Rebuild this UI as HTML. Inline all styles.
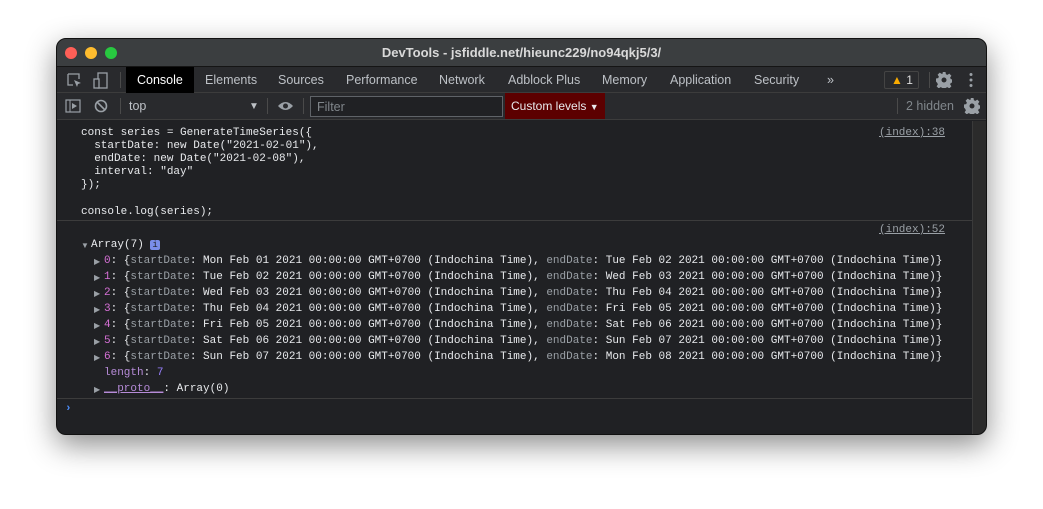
<!DOCTYPE html>
<html><head><style>
*{margin:0;padding:0;box-sizing:border-box}
body{width:1043px;height:509px;background:#fff;position:relative;overflow:hidden;font-family:"Liberation Sans",sans-serif}
.win{position:absolute;left:56px;top:38px;width:931px;height:397px;border-radius:10px;background:#202124;overflow:hidden;box-shadow:0 10px 30px rgba(0,0,0,.45);border:1px solid #111}
.title{height:27px;background:#3b3e40;color:#d9d9d9;font-weight:bold;font-size:13px;text-align:center;line-height:27px;position:relative}
.dot{position:absolute;top:8px;width:12px;height:12px;border-radius:50%}
.tabs{height:27px;background:#292a2d;border-top:1px solid #151515;border-bottom:1px solid #3c3c3c;position:relative;font-size:12.5px;color:#bdc1c6}
.tabs span{position:absolute;top:6px}
.tool{height:27px;background:#292a2d;border-bottom:1px solid #3c3c3c;position:relative;font-size:12.5px;color:#bdc1c6;white-space:nowrap}
.mono{font-family:"Liberation Mono",monospace;font-size:11px;color:#e8eaed;white-space:pre;position:absolute;line-height:13px;height:13px}
.tri{position:absolute;font-size:8px;color:#9aa0a6;line-height:13px}
.k{color:#9aa0a6}.n{color:#d670d6}.p{color:#b68bd8}.v{color:#9980ff}
.link{color:#9aa0a6;text-decoration:underline}
</style></head><body>
<div class="win">
<div class="title">DevTools - jsfiddle.net/hieunc229/no94qkj5/3/
<div class="dot" style="left:8px;background:#fe5f57"></div>
<div class="dot" style="left:28px;background:#febc2e"></div>
<div class="dot" style="left:48px;background:#28c840"></div>
</div>
<div class="tabs">
<svg style="position:absolute;left:10px;top:6px" width="16" height="16"><path d="M1 1h11v5M1 1v11h5" stroke="#9aa0a6" fill="none" stroke-width="1.3"/><path d="M7 7l7 3-3 1-1 3z" fill="#9aa0a6"/></svg>
<svg style="position:absolute;left:36px;top:5px" width="16" height="18"><rect x="5" y="1" width="9" height="15" stroke="#9aa0a6" fill="none" stroke-width="1.3"/><rect x="1" y="7" width="5" height="9" stroke="#9aa0a6" fill="#292a2d" stroke-width="1.3"/></svg>
<div style="position:absolute;left:63px;top:5px;width:1px;height:16px;background:#4a4a4a"></div>
<div style="position:absolute;left:69px;top:0;width:68px;height:26px;background:#000"></div>
<span style="left:80px;color:#fff">Console</span>
<span style="left:148px">Elements</span><span style="left:221px">Sources</span><span style="left:289px">Performance</span><span style="left:382px">Network</span><span style="left:451px">Adblock Plus</span><span style="left:545px">Memory</span><span style="left:613px">Application</span><span style="left:697px">Security</span><span style="left:770px">»</span>
<div style="position:absolute;left:827px;top:4px;width:35px;height:18px;border:1px solid #444;border-radius:2px;font-size:12px;color:#ddd;padding-left:6px;line-height:16px"><span style="color:#f9ab00;position:static">▲</span> 1</div>
<div style="position:absolute;left:872px;top:5px;width:1px;height:16px;background:#4a4a4a"></div>
<svg style="position:absolute;left:879px;top:5px" width="16" height="16" viewBox="0 0 16 16"><path d="M6.5 0h3l.4 2.2 1.5.7 1.9-1.3 2.1 2.1-1.3 1.9.7 1.5 2.2.4v3l-2.2.4-.7 1.5 1.3 1.9-2.1 2.1-1.9-1.3-1.5.7-.4 2.2h-3l-.4-2.2-1.5-.7-1.9 1.3-2.1-2.1 1.3-1.9-.7-1.5L0 9.5v-3l2.2-.4.7-1.5L1.6 2.7l2.1-2.1 1.9 1.3 1.5-.7z" fill="#9aa0a6"/><circle cx="8" cy="8" r="2.5" fill="#292a2d"/></svg>
<svg style="position:absolute;left:912px;top:5px" width="4" height="16"><circle cx="2" cy="2.5" r="1.5" fill="#9aa0a6"/><circle cx="2" cy="8" r="1.5" fill="#9aa0a6"/><circle cx="2" cy="13.5" r="1.5" fill="#9aa0a6"/></svg>
</div>
<div class="tool">
<svg style="position:absolute;left:8px;top:6px" width="16" height="14"><rect x="1" y="1" width="14" height="12" stroke="#9aa0a6" fill="none" stroke-width="1.2"/><path d="M5 1v12" stroke="#9aa0a6"/><path d="M7 4l5 3-5 3z" fill="#9aa0a6"/></svg>
<svg style="position:absolute;left:37px;top:6px" width="14" height="14"><circle cx="7" cy="7" r="5.5" stroke="#9aa0a6" fill="none" stroke-width="1.6"/><path d="M3 3l8 8" stroke="#9aa0a6" stroke-width="1.6"/></svg>
<div style="position:absolute;left:63px;top:5px;width:1px;height:16px;background:#4a4a4a"></div>
<span style="position:absolute;left:72px;top:6px">top</span>
<span style="position:absolute;left:192px;top:8px;font-size:10px">▼</span>
<div style="position:absolute;left:210px;top:5px;width:1px;height:16px;background:#4a4a4a"></div>
<svg style="position:absolute;left:220px;top:7px" width="17" height="12"><path d="M1 6q7.5-8 15 0q-7.5 8-15 0z" fill="#9aa0a6"/><circle cx="8.5" cy="6" r="2.5" fill="#292a2d"/></svg>
<div style="position:absolute;left:246px;top:5px;width:1px;height:16px;background:#4a4a4a"></div>
<div style="position:absolute;left:253px;top:3px;width:193px;height:21px;border:1px solid #5f6368;background:#202124;color:#80868b;padding:3px 6px">Filter</div>
<div style="position:absolute;left:448px;top:0;width:100px;height:26px;background:#5c0000;color:#e8eaed;padding:6px 6px;white-space:nowrap;font-size:12px">Custom levels <span style="font-size:9px">▼</span></div>
<div style="position:absolute;left:840px;top:5px;width:1px;height:16px;background:#4a4a4a"></div>
<span style="position:absolute;left:849px;top:6px;color:#80868b">2 hidden</span>
<svg style="position:absolute;left:907px;top:5px" width="16" height="16" viewBox="0 0 16 16"><path d="M6.5 0h3l.4 2.2 1.5.7 1.9-1.3 2.1 2.1-1.3 1.9.7 1.5 2.2.4v3l-2.2.4-.7 1.5 1.3 1.9-2.1 2.1-1.9-1.3-1.5.7-.4 2.2h-3l-.4-2.2-1.5-.7-1.9 1.3-2.1-2.1 1.3-1.9-.7-1.5L0 9.5v-3l2.2-.4.7-1.5L1.6 2.7l2.1-2.1 1.9 1.3 1.5-.7z" fill="#9aa0a6"/><circle cx="8" cy="8" r="2.5" fill="#292a2d"/></svg>
</div>
<div style="position:absolute;left:915px;top:82px;width:15px;height:315px;background:#2b2b2b;border-left:1px solid #3a3a3a"></div>
<div style="position:absolute;left:0;top:181px;width:915px;height:1px;background:#3c3c3c"></div>
<div style="position:absolute;left:0;top:359px;width:915px;height:1px;background:#3c3c3c"></div>
<div class="mono" style="left:24px;top:88px">const series = GenerateTimeSeries({</div>
<div class="mono" style="left:24px;top:101px">  startDate: new Date("2021-02-01"),</div>
<div class="mono" style="left:24px;top:114px">  endDate: new Date("2021-02-08"),</div>
<div class="mono" style="left:24px;top:127px">  interval: "day"</div>
<div class="mono" style="left:24px;top:140px">});</div>
<div class="mono" style="left:24px;top:167px">console.log(series);</div>
<div class="mono link" style="left:822px;top:88px">(index):38</div>
<div class="mono link" style="left:822px;top:185px">(index):52</div>
<div class="tri" style="left:24px;top:200px">▼</div>
<div class="mono" style="left:34px;top:200px">Array(7) <span style="background:#7a8ee8;color:#202124;border-radius:2px;padding:0 2px;font-size:9px">i</span></div>
<div class="tri" style="left:37px;top:216px">▶</div><div class="mono" style="left:47px;top:216px"><span class="n">0</span>: {<span class="k">startDate</span>: Mon Feb 01 2021 00:00:00 GMT+0700 (Indochina Time), <span class="k">endDate</span>: Tue Feb 02 2021 00:00:00 GMT+0700 (Indochina Time)}</div>
<div class="tri" style="left:37px;top:232px">▶</div><div class="mono" style="left:47px;top:232px"><span class="n">1</span>: {<span class="k">startDate</span>: Tue Feb 02 2021 00:00:00 GMT+0700 (Indochina Time), <span class="k">endDate</span>: Wed Feb 03 2021 00:00:00 GMT+0700 (Indochina Time)}</div>
<div class="tri" style="left:37px;top:248px">▶</div><div class="mono" style="left:47px;top:248px"><span class="n">2</span>: {<span class="k">startDate</span>: Wed Feb 03 2021 00:00:00 GMT+0700 (Indochina Time), <span class="k">endDate</span>: Thu Feb 04 2021 00:00:00 GMT+0700 (Indochina Time)}</div>
<div class="tri" style="left:37px;top:264px">▶</div><div class="mono" style="left:47px;top:264px"><span class="n">3</span>: {<span class="k">startDate</span>: Thu Feb 04 2021 00:00:00 GMT+0700 (Indochina Time), <span class="k">endDate</span>: Fri Feb 05 2021 00:00:00 GMT+0700 (Indochina Time)}</div>
<div class="tri" style="left:37px;top:280px">▶</div><div class="mono" style="left:47px;top:280px"><span class="n">4</span>: {<span class="k">startDate</span>: Fri Feb 05 2021 00:00:00 GMT+0700 (Indochina Time), <span class="k">endDate</span>: Sat Feb 06 2021 00:00:00 GMT+0700 (Indochina Time)}</div>
<div class="tri" style="left:37px;top:296px">▶</div><div class="mono" style="left:47px;top:296px"><span class="n">5</span>: {<span class="k">startDate</span>: Sat Feb 06 2021 00:00:00 GMT+0700 (Indochina Time), <span class="k">endDate</span>: Sun Feb 07 2021 00:00:00 GMT+0700 (Indochina Time)}</div>
<div class="tri" style="left:37px;top:312px">▶</div><div class="mono" style="left:47px;top:312px"><span class="n">6</span>: {<span class="k">startDate</span>: Sun Feb 07 2021 00:00:00 GMT+0700 (Indochina Time), <span class="k">endDate</span>: Mon Feb 08 2021 00:00:00 GMT+0700 (Indochina Time)}</div>
<div class="mono" style="left:47px;top:328px"><span class="p">length</span>: <span class="v">7</span></div>
<div class="tri" style="left:37px;top:344px">▶</div><div class="mono" style="left:47px;top:344px"><span class="p" style="text-decoration:underline">__proto__</span>: Array(0)</div>
<div class="mono" style="left:8px;top:364px;color:#4d90fe;font-weight:bold">›</div>
</div>
</body></html>
